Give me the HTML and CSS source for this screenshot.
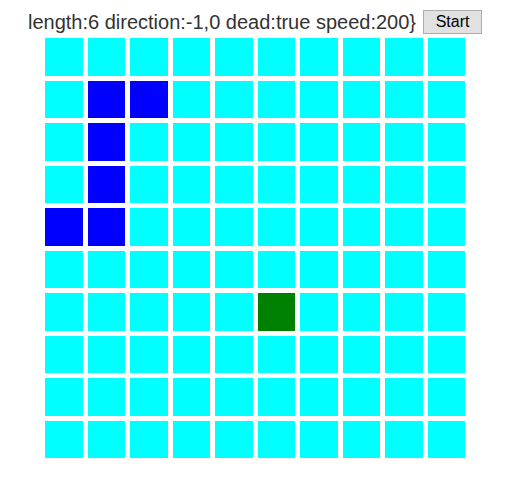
FILE: index.html
```html
<!DOCTYPE html>
<html>
<head>
<meta charset="utf-8">
<link rel="stylesheet" href="styles.css">
</head>
<body>
<div class="app">
  <div class="status">length:6 direction:-1,0 dead:true speed:200} <button class="start">Start</button></div>
  <div class="board">
    <div class="cell"></div><div class="cell"></div><div class="cell"></div><div class="cell"></div><div class="cell"></div><div class="cell"></div><div class="cell"></div><div class="cell"></div><div class="cell"></div><div class="cell"></div>
    <div class="cell"></div><div class="cell snake"></div><div class="cell snake"></div><div class="cell"></div><div class="cell"></div><div class="cell"></div><div class="cell"></div><div class="cell"></div><div class="cell"></div><div class="cell"></div>
    <div class="cell"></div><div class="cell snake"></div><div class="cell"></div><div class="cell"></div><div class="cell"></div><div class="cell"></div><div class="cell"></div><div class="cell"></div><div class="cell"></div><div class="cell"></div>
    <div class="cell"></div><div class="cell snake"></div><div class="cell"></div><div class="cell"></div><div class="cell"></div><div class="cell"></div><div class="cell"></div><div class="cell"></div><div class="cell"></div><div class="cell"></div>
    <div class="cell snake"></div><div class="cell snake"></div><div class="cell"></div><div class="cell"></div><div class="cell"></div><div class="cell"></div><div class="cell"></div><div class="cell"></div><div class="cell"></div><div class="cell"></div>
    <div class="cell"></div><div class="cell"></div><div class="cell"></div><div class="cell"></div><div class="cell"></div><div class="cell"></div><div class="cell"></div><div class="cell"></div><div class="cell"></div><div class="cell"></div>
    <div class="cell"></div><div class="cell"></div><div class="cell"></div><div class="cell"></div><div class="cell"></div><div class="cell food"></div><div class="cell"></div><div class="cell"></div><div class="cell"></div><div class="cell"></div>
    <div class="cell"></div><div class="cell"></div><div class="cell"></div><div class="cell"></div><div class="cell"></div><div class="cell"></div><div class="cell"></div><div class="cell"></div><div class="cell"></div><div class="cell"></div>
    <div class="cell"></div><div class="cell"></div><div class="cell"></div><div class="cell"></div><div class="cell"></div><div class="cell"></div><div class="cell"></div><div class="cell"></div><div class="cell"></div><div class="cell"></div>
    <div class="cell"></div><div class="cell"></div><div class="cell"></div><div class="cell"></div><div class="cell"></div><div class="cell"></div><div class="cell"></div><div class="cell"></div><div class="cell"></div><div class="cell"></div>
  </div>
</div>
</body>
</html>
```
FILE: styles.css
```css
body {
  margin: 8px;
  background: #fff;
  font-family: "Liberation Sans", Arial, sans-serif;
  color: #333;
}
.app {
  display: flex;
  flex-direction: column;
  align-items: center;
}
.status {
  font-size: 20px;
  height: 26px;
  display: flex;
  align-items: center;
  gap: 7px;
  margin-top: 1px;
}
.start {
  font-family: "Liberation Sans", Arial, sans-serif;
  font-size: 16px;
  color: #000;
  background: #e1e1e1;
  border: 1px solid #adadad;
  border-radius: 0;
  width: 59px;
  height: 24px;
  padding: 0;
}
.board {
  margin-top: 3px;
  width: 420px;
  display: grid;
  grid-template-columns: repeat(10, 37.5px);
  grid-auto-rows: 37.5px;
  gap: 5px;
}
.cell {
  background: #00ffff;
}
.cell.snake {
  background: #0000ff;
}
.cell.food {
  background: #008000;
}
```
